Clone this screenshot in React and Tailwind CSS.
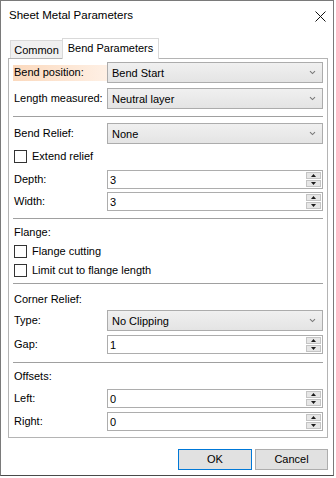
import React from 'react';

const font = { fontFamily: '"Liberation Sans", Arial, sans-serif' };

const Chevron = () => (
  <svg width="7" height="5" viewBox="0 0 7 5" className="shrink-0">
    <path d="M1 1.2 L3.5 3.6 L6 1.2" fill="none" stroke="#7a7a7a" strokeWidth="1.1" />
  </svg>
);

const Dropdown = ({ value }) => (
  <div className="w-[216px] h-[21px] border border-[#acacac] bg-linear-to-b from-[#f0f0f0] to-[#e4e4e4] flex items-center justify-between pl-[4px] pr-[6px]">
    <span className="pt-[1px]">{value}</span>
    <Chevron />
  </div>
);

const Arrow = ({ up }) => (
  <svg width="5" height="3" viewBox="0 0 5 3">
    <path d={up ? 'M0 3 L2.5 0 L5 3 Z' : 'M0 0 L5 0 L2.5 3 Z'} fill="#1a1a1a" />
  </svg>
);

const SpinInput = ({ value }) => (
  <div className="w-[216px] h-[19px] border border-[#adadad] bg-white flex items-center">
    <span className="pl-[2px] pt-[1px] flex-1">{value}</span>
    <div className="w-[15px] h-full flex flex-col gap-[1px] py-[1px] mr-[1px]">
      <div className="flex-1 border border-[#c4c4c4] bg-[#e6e6e6] flex items-center justify-center">
        <Arrow up />
      </div>
      <div className="flex-1 border border-[#c4c4c4] bg-[#e6e6e6] flex items-center justify-center">
        <Arrow />
      </div>
    </div>
  </div>
);

const Row = ({ label, children, className = '', highlight }) => (
  <div className={`flex items-center ${className}`}>
    <div
      className={`w-[94px] h-[16px] pl-[1px] flex items-center ${
        highlight ? 'bg-linear-to-r from-[#fbd9bd] to-[#fef0e5]' : ''
      }`}
    >
      {label}
    </div>
    {children}
  </div>
);

const Check = ({ label, className = '' }) => (
  <div className={`flex items-center h-[13px] ${className}`}>
    <div className="ml-[1px] w-[13px] h-[13px] border border-[#333333] bg-white" />
    <span className="ml-[5px]">{label}</span>
  </div>
);

const Sep = ({ className = '' }) => <div className={`h-px bg-[#a0a0a0] ${className}`} />;

const Label = ({ children, className = '' }) => (
  <div className={`h-[16px] pl-[1px] flex items-center ${className}`}>{children}</div>
);

export default function App() {
  return (
    <div className="w-[336px] h-[478px] bg-white text-[11px] text-black leading-none" style={font}>
      <div className="w-[334px] h-[476px] border border-[#7a7a7a] border-b-[#4a4a4a] bg-white flex flex-col">
        {/* title bar */}
        <div className="h-[30px] flex items-center justify-between pl-[8px] pr-[7px]">
          <span className="text-[11.5px]">Sheet Metal Parameters</span>
          <svg width="11" height="11" viewBox="0 0 11 11">
            <path d="M0.5 0.5 L10.5 10.5 M10.5 0.5 L0.5 10.5" stroke="#111" strokeWidth="1" />
          </svg>
        </div>

        {/* tabs */}
        <div className="ml-[7px] mt-[7px] h-[20px] flex items-end">
          <div className="ml-[2px] w-[52px] h-[18px] border-l border-t border-[#d9d9d9] bg-[#f0f0f0] flex items-center justify-center pt-[1px]">
            Common
          </div>
          <div className="relative z-10 -mb-px w-[97px] h-[21px] border border-b-0 border-[#d9d9d9] bg-white flex items-center justify-center pb-[2px]">
            Bend Parameters
          </div>
        </div>

        {/* panel */}
        <div className="ml-[7px] w-[320px] h-[380px] border border-[#b4b4b4] px-[4px] flex flex-col">
          <Row label="Bend position:" highlight className="mt-[3px]">
            <Dropdown value="Bend Start" />
          </Row>
          <Row label="Length measured:" className="mt-[5px]">
            <Dropdown value="Neutral layer" />
          </Row>
          <Sep className="mt-[7px]" />
          <Row label="Bend Relief:" className="mt-[6px]">
            <Dropdown value="None" />
          </Row>
          <Check label="Extend relief" className="mt-[6px]" />
          <Row label="Depth:" className="mt-[7px]">
            <SpinInput value="3" />
          </Row>
          <Row label="Width:" className="mt-[3px]">
            <SpinInput value="3" />
          </Row>
          <Sep className="mt-[7px]" />
          <Label className="mt-[5px]">Flange:</Label>
          <Check label="Flange cutting" className="mt-[5px]" />
          <Check label="Limit cut to flange length" className="mt-[6px]" />
          <Sep className="mt-[6px]" />
          <Label className="mt-[7px]">Corner Relief:</Label>
          <Row label="Type:" className="mt-[3px]">
            <Dropdown value="No Clipping" />
          </Row>
          <Row label="Gap:" className="mt-[4px]">
            <SpinInput value="1" />
          </Row>
          <Sep className="mt-[8px]" />
          <Label className="mt-[5px]">Offsets:</Label>
          <Row label="Left:" className="mt-[5px]">
            <SpinInput value="0" />
          </Row>
          <Row label="Right:" className="mt-[4px]">
            <SpinInput value="0" />
          </Row>
        </div>

        {/* buttons */}
        <div className="ml-[7px] w-[320px] mt-[11px] flex justify-end gap-[3px]">
          <button className="w-[74px] h-[21px] border border-[#0078d7] bg-[#e1e1e1] flex items-center justify-center">
            OK
          </button>
          <button className="w-[73px] h-[21px] border border-[#adadad] bg-[#e1e1e1] flex items-center justify-center">
            Cancel
          </button>
        </div>
      </div>
    </div>
  );
}
